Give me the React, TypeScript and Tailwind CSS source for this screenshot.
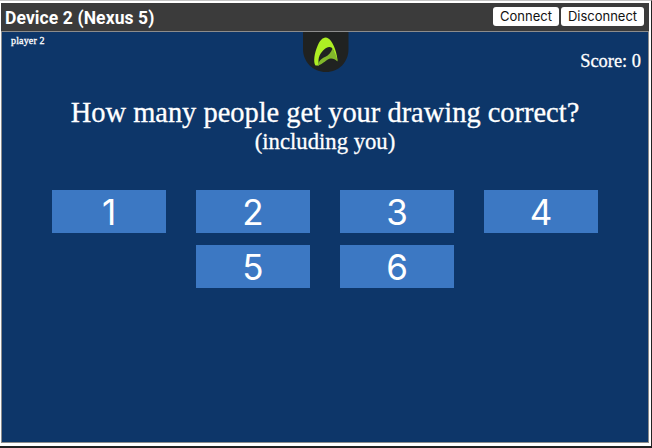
import React from "react";

const button =
  "h-[19px] rounded-[3px] bg-white text-center font-['Inter','Liberation_Sans',sans-serif] text-[13px] leading-[19px] text-[#111] whitespace-nowrap";

function Answer({ value }: { value: number }) {
  return (
    <button className="h-[43px] w-[114px] bg-[#3c78c3] pt-px font-['Inter','Liberation_Sans',sans-serif] text-[35px] leading-[43px] text-white">
      {value}
    </button>
  );
}

function Logo() {
  return (
    <svg width="46" height="40" viewBox="0 0 46 40" className="block">
      <path d="M0 0H45.500V17C45.500 30 36 40 23 40S0 30 0 17Z" fill="#202221" />
      <path
        d="M12.500 33.500C10 30 11.500 21 14.500 14C16.500 9 19.500 5.500 22.500 5.500C26.500 5.500 30 11 32 17C33.500 21 34.500 26 34.500 29L31 24C31.500 18 29 14.500 26 15C21 16 16 22 15.500 28C15.500 30 15.500 32 16 33.500Z"
        fill="#adee24"
      />
      <path
        d="M14.500 33.500C16.500 28 18.500 26.500 22 25C26 23 28 20.500 29.500 16.500C32 20 34 25 34.500 29.500C32.500 27.500 30.500 26.500 28 26.500C23.500 26.500 20.500 32.500 14.500 33.500Z"
        fill="#82b82b"
      />
    </svg>
  );
}

export default function App() {
  return (
    <div className="flex h-[448px] w-[652px] flex-col overflow-hidden border-r border-b-2 border-t border-r-[#222] border-b-[#222] border-t-[#c4c4c4] bg-white pt-[2px] pr-[2px] pb-[3px] pl-px">
      <header className="flex h-[28px] shrink-0 items-center justify-between bg-[#3b3b3b] pr-[5px] pl-[4px]">
        <h1 className="pt-[2px] font-['Roboto','Liberation_Sans',sans-serif] text-[17.500px] leading-[26px] font-bold tracking-[0.1px] text-white">
          Device 2 (Nexus 5)
        </h1>
        <div className="mb-px flex gap-[2px]">
          <button className={`${button} w-[66px]`}>Connect</button>
          <button className={`${button} w-[83px]`}>Disconnect</button>
        </div>
      </header>
      <main className="relative flex-1 border border-[#8c8c8c] bg-[#0d3669] font-['Liberation_Serif',serif] text-white">
        <div className="flex h-[40px] items-start justify-between pr-[7px] pl-[9px]">
          <span className="pt-[2px] text-[10px] leading-[14px] tracking-[0.15px] [-webkit-text-stroke:0.3px_white]">player 2</span>
          <span className="pt-[18px] text-[18.400px] leading-[22px] [-webkit-text-stroke:0.3px_white]">Score: 0</span>
        </div>
        <div className="absolute top-0 left-[301px]">
          <Logo />
        </div>
        <h2 className="mt-[25px] text-center text-[28.450px] leading-[32px] [-webkit-text-stroke:0.3px_white]">
          How many people get your drawing correct?
        </h2>
        <p className="text-center text-[22.700px] leading-[26px] [-webkit-text-stroke:0.3px_white]">(including you)</p>
        <div className="mt-[35px] flex flex-wrap justify-center gap-x-[30px] gap-y-[12px] px-[40px]">
          {[1, 2, 3, 4, 5, 6].map((value) => (
            <Answer key={value} value={value} />
          ))}
        </div>
      </main>
    </div>
  );
}
